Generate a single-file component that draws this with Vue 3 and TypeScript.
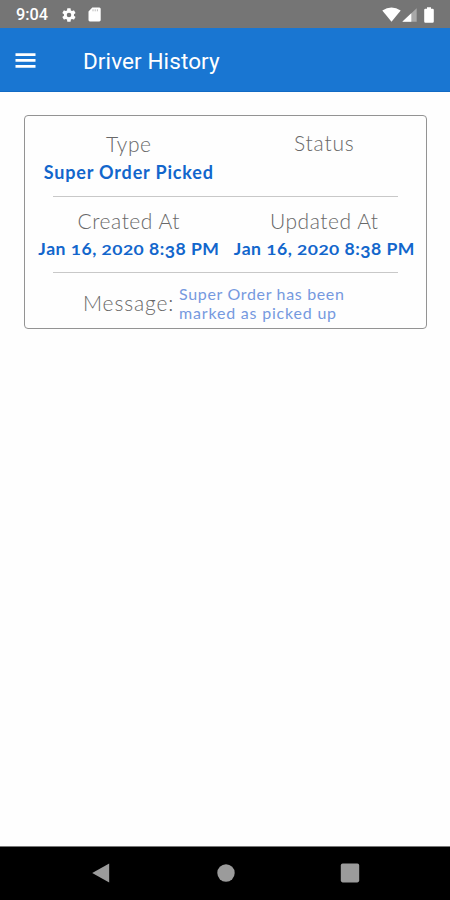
<script setup lang="ts">
interface Entry {
  type: string
  status: string
  createdAt: string
  updatedAt: string
  message: string[]
}

const entry: Entry = {
  type: 'Super Order Picked',
  status: '',
  createdAt: 'Jan 16, 2020 8:38 PM',
  updatedAt: 'Jan 16, 2020 8:38 PM',
  message: ['Super Order has been', 'marked as picked up'],
}

// Old-style figures: 0, 1, 2 sit at x-height and 3 hangs below the baseline.
function figure(ch: string): string {
  if ('012'.includes(ch)) return 'short'
  return ch === '3' ? 'low' : 'full'
}

function words(text: string): string[][] {
  return text.split(' ').map((word) => [...word])
}
</script>

<template>
  <div class="screen">
    <header class="status">
      <span class="clock">9:04</span>
      <svg class="gear" viewBox="0 0 24 24"><path fill="#fff" fill-rule="evenodd" d="M19.4 13c0-.3.1-.7.1-1s0-.7-.1-1l2.1-1.600c.2-.2.200-.4.100-.6l-2-3.500c-.1-.2-.4-.3-.6-.2l-2.500 1c-.5-.4-1.100-.7-1.700-1L14.400 2.400c0-.2-.2-.4-.5-.4h-4c-.2 0-.5.2-.5.4L9 5.100c-.6.3-1.200.6-1.700 1l-2.500-1c-.2-.1-.5 0-.6.2l-2 3.500c-.1.200-.1.500.1.600L4.500 11c-.1.300-.1.700-.1 1s0 .7.100 1l-2.200 1.600c-.2.200-.2.400-.1.600l2 3.500c.1.200.4.300.6.200l2.500-1c.5.400 1.100.7 1.700 1l.4 2.700c0 .2.300.4.500.4h4c.3 0 .5-.2.500-.4l.4-2.700c.6-.3 1.200-.6 1.700-1l2.500 1c.2.100.5 0 .6-.2l2-3.500c.1-.2.100-.4-.1-.6L19.400 13zM12 15.400a3.400 3.400 0 1 1 0-6.800 3.400 3.400 0 0 1 0 6.800z" /></svg>
      <svg class="sd" viewBox="0 0 13 15"><path fill="#fff" d="M4.300.5h7A1.400 1.400 0 0 1 12.700 2v11a1.400 1.400 0 0 1-1.400 1.400H1.900A1.400 1.400 0 0 1 .5 13V4.500z" /><path stroke="#aaa" stroke-width=".8" d="M5 2.300v2M7.200 2.300v2M9.400 2.300v2" /></svg>
      <span class="grow"></span>
      <svg class="wifi" viewBox="0 0 19 15"><path fill="#fff" d="M.3 3.600Q9.500-2.600 18.700 3.600L9.500 14.700z" /></svg>
      <svg class="cell" viewBox="0 0 15 14"><path fill="#a9a9a9" d="M14.700.3v13.400H.3z" /><path fill="#fff" d="M9.300 5.300v8.400H.3z" /></svg>
      <svg class="battery" viewBox="0 0 10 16"><path fill="#fff" d="M3 .2h4v1.600h1.600q1.200 0 1.200 1.200v11.600q0 1.200-1.200 1.200H1.400q-1.200 0-1.200-1.200V3q0-1.200 1.200-1.200H3z" /></svg>
    </header>

    <nav class="bar">
      <svg class="menu" viewBox="0 0 20 15"><path fill="#fff" d="M0 .3h20v2.700H0zM0 6.100h20v2.700H0zM0 12h20v2.700H0z" /></svg>
      <h1>Driver History</h1>
    </nav>

    <main>
      <section class="card">
        <div class="row first">
          <div class="cell-box">
            <span class="label">Type</span>
            <span class="value kind">{{ entry.type }}</span>
          </div>
          <div class="cell-box raised">
            <span class="label wide">Status</span>
            <span class="value">{{ entry.status }}</span>
          </div>
        </div>
        <hr />
        <div class="row second">
          <div v-for="[label, date] in [['Created At', entry.createdAt], ['Updated At', entry.updatedAt]]" :key="label" class="cell-box">
            <span class="label">{{ label }}</span>
            <span class="value date"><template v-for="(word, w) in words(date)" :key="w"><template v-if="w > 0">{{ ' ' }}</template><span v-for="(ch, i) in word" :key="i" :class="figure(ch)">{{ ch }}</span></template></span>
          </div>
        </div>
        <hr />
        <div class="message">
          <span class="label wide">Message:</span>
          <p><span v-for="line in entry.message" :key="line">{{ line }}</span></p>
        </div>
      </section>
    </main>

    <footer>
      <svg viewBox="0 0 20 20"><path fill="#9b9b9b" d="M18.200.6v18.800L1.200 10z" /></svg>
      <svg viewBox="0 0 20 20"><circle cx="10" cy="10" r="8.700" fill="#9b9b9b" /></svg>
      <svg viewBox="0 0 20 20"><rect x=".8" y=".6" width="18.400" height="18.800" rx="1.800" fill="#9b9b9b" /></svg>
    </footer>
  </div>
</template>

<style>
body {
  margin: 0;
  background: #fff;
}
</style>

<style scoped>
.screen {
  width: 450px;
  height: 900px;
  display: flex;
  flex-direction: column;
  overflow: hidden;
  background: #fefefe;
  font-family: Lato, sans-serif;
}
svg {
  display: block;
  flex: none;
}
.status {
  height: 28px;
  box-sizing: border-box;
  display: flex;
  align-items: center;
  padding: 1px 16px 0;
  background: #757575;
}
.clock {
  width: 45px;
  font: 500 16.3px/28px Roboto, sans-serif;
  color: #fff;
}
.gear { width: 16px; height: 16px; }
.sd { width: 13px; height: 15px; margin-left: 11px; }
.grow { flex: 1; }
.wifi { width: 19px; height: 15px; }
.cell { width: 15px; height: 14px; margin: 1px 7px 0 1px; }
.battery { width: 10px; height: 16px; }
.bar {
  height: 64px;
  box-sizing: border-box;
  display: flex;
  align-items: center;
  padding: 2px 15px 0;
  background: #1976d2;
  border-bottom: 1px solid #126ac4;
}
.menu { width: 21px; height: 15px; }
h1 {
  margin: 1px 0 0 47px;
  font: 400 22.5px/30px Roboto, sans-serif;
  letter-spacing: .1px;
  color: #fff;
}
main {
  flex: 1;
  padding: 23px 23px 0 24px;
}
.card {
  height: 214px;
  box-sizing: border-box;
  border: 1px solid #939393;
  border-radius: 4px;
  display: flex;
  flex-direction: column;
}
.row {
  display: grid;
  grid-template-columns: 1fr 1fr;
  padding: 0 4px 0 6px;
}
.first { height: 66px; padding-top: 14px; }
.second { height: 60px; padding-top: 10px; padding-bottom: 5px; }
.row { box-sizing: content-box; }
.cell-box {
  display: flex;
  flex-direction: column;
  align-items: center;
  margin-top: -1px;
  white-space: nowrap;
}
.raised { margin-top: -2px; }
.label {
  font-weight: 300;
  font-size: 21px;
  line-height: 29px;
  letter-spacing: .55px;
  color: #686868;
}
.wide { letter-spacing: .85px; }
.value {
  font-weight: 700;
  font-size: 18px;
  line-height: 28px;
  letter-spacing: .5px;
  color: #1266cc;
}
.kind { letter-spacing: .83px; }
.date { font-size: 17.600px; letter-spacing: .48px; }
.short, .low, .full { display: inline-block; }
.short { transform: scaleY(.75); transform-origin: 50% 20px; }
.low { transform: translateY(3px); }
hr {
  width: 345px;
  height: 1px;
  flex: none;
  margin: 0 auto;
  border: 0;
  background: #c8c8c8;
}
.message {
  display: flex;
  align-items: center;
  padding: 10px 0 0 58px;
}
p {
  margin: 0 0 0 5px;
  padding-top: 1px;
  font-size: 16px;
  font-weight: 400;
  line-height: 19px;
  letter-spacing: .66px;
  color: #7599df;
}
p span { display: block; }
p span + span { letter-spacing: .8px; }
footer {
  height: 54px;
  box-sizing: border-box;
  display: flex;
  justify-content: space-between;
  align-items: center;
  padding: 0 90px 1px 91px;
  background: #000;
  border-top: 1px solid #777;
}
footer svg { width: 20px; height: 20px; }
</style>
